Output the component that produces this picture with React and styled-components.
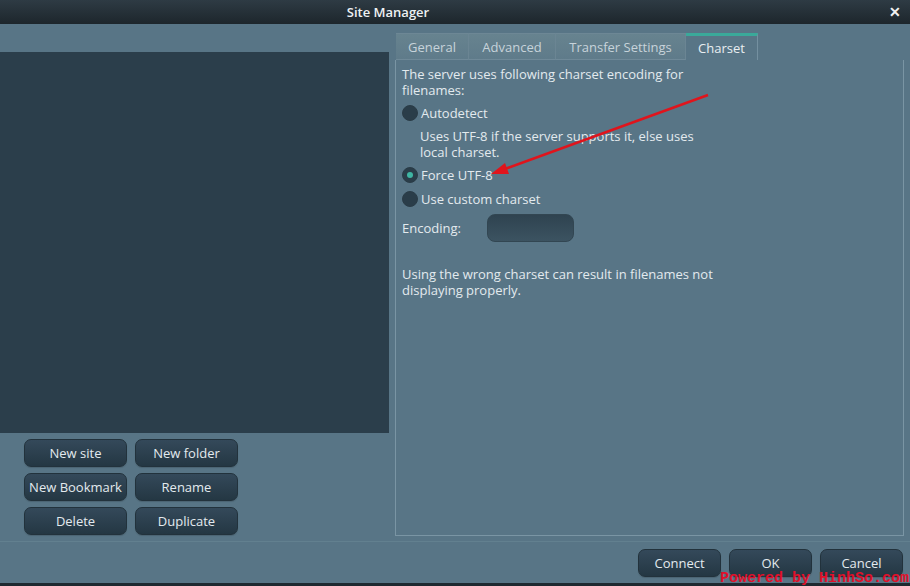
import React from "react";
import styled, { createGlobalStyle } from "styled-components";

const Global = createGlobalStyle`
  html, body { margin: 0; padding: 0; width: 910px; height: 586px; overflow: hidden; }
  body { background: #587586; font-family: "Open Sans", "Noto Sans", sans-serif; font-size: 13px; color: #e3eaee; }
  * { box-sizing: border-box; }
`;

const Window = styled.div`
  width: 910px;
  height: 586px;
  display: flex;
  flex-direction: column;
  position: relative;
  background: #587586;
`;

const TitleBar = styled.div`
  height: 24px;
  flex: none;
  display: flex;
  align-items: center;
  justify-content: center;
  padding-right: 134px;
  position: relative;
  background: linear-gradient(#2e3b44, #1d262c);
  color: #eef1f3;
  font-size: 13px;
  font-weight: 600;
`;

const CloseBtn = styled.span`
  position: absolute;
  right: 9px;
  top: 4px;
  font-size: 14px;
  font-weight: 700;
  color: #f2f2f2;
  line-height: 16px;
`;

const Body = styled.div`
  flex: 1;
  display: flex;
`;

const LeftCol = styled.div`
  width: 389px;
  display: flex;
  flex-direction: column;
  padding-top: 28px;
`;

const Tree = styled.div`
  height: 381px;
  background: #2b3e4b;
`;

const ButtonGrid = styled.div`
  display: grid;
  grid-template-columns: 103px 103px;
  grid-auto-rows: 28px;
  column-gap: 8px;
  row-gap: 6px;
  padding: 6px 0 0 24px;
`;

const Btn = styled.button`
  width: ${(p) => p.$w || 103}px;
  height: 28px;
  border: 1px solid #22323c;
  border-radius: 7px;
  background: linear-gradient(#34495a, #243743);
  color: #e3eaee;
  font-family: inherit;
  font-size: 13px;
  padding: 0;
  box-shadow: 0 1px 1px rgba(0,0,0,0.15);
`;

const RightCol = styled.div`
  flex: 1;
  display: flex;
  flex-direction: column;
  padding: 9px 6px 0 6px;
`;

const TabBar = styled.div`
  display: flex;
  height: 27px;
  padding-left: 1px;
`;

const Tab = styled.div`
  height: 27px;
  width: ${(p) => p.$w}px;
  display: flex;
  align-items: center;
  justify-content: center;
  color: ${(p) => (p.$active ? "#e8eef1" : "#c7d3da")};
  background: ${(p) => (p.$active ? "#587586" : "linear-gradient(#67838f, #5f7b8a)")};
  border-top: ${(p) => (p.$active ? "3px solid #3aa99a" : "1px solid #6d8795")};
  border-right: 1px solid ${(p) => (p.$active ? "#7490a0" : "#6b8593")};
  border-bottom: ${(p) => (p.$active ? "none" : "1px solid #6f8998")};
  padding-top: ${(p) => (p.$active ? "0" : "1px")};
`;

const Pane = styled.div`
  height: 476px;
  border: 1px solid #7a95a4;
  border-top: none;
  padding: 6px 6px;
  display: flex;
  flex-direction: column;
  line-height: 16px;
`;

const Para = styled.div`
  margin-top: ${(p) => p.$mt || 0}px;
  margin-bottom: ${(p) => p.$mb || 0}px;
  margin-left: ${(p) => p.$ml || 0}px;
`;

const RadioRow = styled.div`
  display: flex;
  align-items: center;
  gap: 3px;
  height: 24px;
`;

const RadioDot = styled.span`
  width: 16px;
  height: 16px;
  border-radius: 50%;
  background: #2a3d49;
  border: 1px solid #2a3c47;
  display: flex;
  align-items: center;
  justify-content: center;
  &::after {
    content: "";
    width: 6px;
    height: 6px;
    border-radius: 50%;
    background: ${(p) => (p.$checked ? "#3fb5a3" : "transparent")};
  }
`;

const FieldRow = styled.div`
  display: flex;
  align-items: center;
  height: 28px;
  margin-top: 3px;
`;

const FieldLabel = styled.span`
  width: 85px;
`;

const Input = styled.div`
  width: 87px;
  height: 28px;
  border-radius: 8px;
  background: linear-gradient(#2f4350, #3c5361);
  border: 1px solid #324652;
`;

const Footer = styled.div`
  height: 47px;
  border-top: 1px solid #62808f;
  margin-top: 5px;
  display: flex;
  justify-content: flex-end;
  align-items: flex-start;
  gap: 8px;
  padding: 7px 7px 0 0;
`;

const BottomStrip = styled.div`
  height: 4px;
  background: #1e2930;
`;

const Watermark = styled.span`
  position: absolute;
  left: 720px;
  top: 571px;
  font-family: "Liberation Mono", monospace;
  font-weight: 700;
  font-size: 15px;
  color: #e0102a;
  line-height: 15px;
  white-space: nowrap;
`;

const ArrowSvg = styled.svg`
  position: absolute;
  left: 0;
  top: 0;
  pointer-events: none;
`;

export default function App() {
  return (
    <>
      <Global />
      <Window>
        <TitleBar>
          Site Manager
          <CloseBtn>✕</CloseBtn>
        </TitleBar>
        <Body>
          <LeftCol>
            <Tree />
            <ButtonGrid>
              <Btn>New site</Btn>
              <Btn>New folder</Btn>
              <Btn>New Bookmark</Btn>
              <Btn>Rename</Btn>
              <Btn>Delete</Btn>
              <Btn>Duplicate</Btn>
            </ButtonGrid>
          </LeftCol>
          <RightCol>
            <TabBar>
              <Tab $w={73}>General</Tab>
              <Tab $w={87}>Advanced</Tab>
              <Tab $w={130}>Transfer Settings</Tab>
              <Tab $w={72} $active>Charset</Tab>
            </TabBar>
            <Pane>
              <Para $mb={3}>
                The server uses following charset encoding for
                <br />
                filenames:
              </Para>
              <RadioRow>
                <RadioDot />
                Autodetect
              </RadioRow>
              <Para $ml={18} $mt={3} $mb={3}>
                Uses UTF-8 if the server supports it, else uses
                <br />
                local charset.
              </Para>
              <RadioRow>
                <RadioDot $checked />
                Force UTF-8
              </RadioRow>
              <RadioRow>
                <RadioDot />
                Use custom charset
              </RadioRow>
              <FieldRow>
                <FieldLabel>Encoding:</FieldLabel>
                <Input />
              </FieldRow>
              <Para $mt={24}>
                Using the wrong charset can result in filenames not
                <br />
                displaying properly.
              </Para>
            </Pane>
          </RightCol>
        </Body>
        <Footer>
          <Btn $w={83}>Connect</Btn>
          <Btn $w={83}>OK</Btn>
          <Btn $w={83}>Cancel</Btn>
        </Footer>
        <BottomStrip />
        <ArrowSvg width="910" height="586">
          <line x1="708" y1="95" x2="502" y2="170" stroke="#e0141c" strokeWidth="2.5" />
          <polygon points="491,174 505,163 509,174" fill="#e0141c" />
        </ArrowSvg>
        <Watermark>Powered by HinhSo.com</Watermark>
      </Window>
    </>
  );
}
